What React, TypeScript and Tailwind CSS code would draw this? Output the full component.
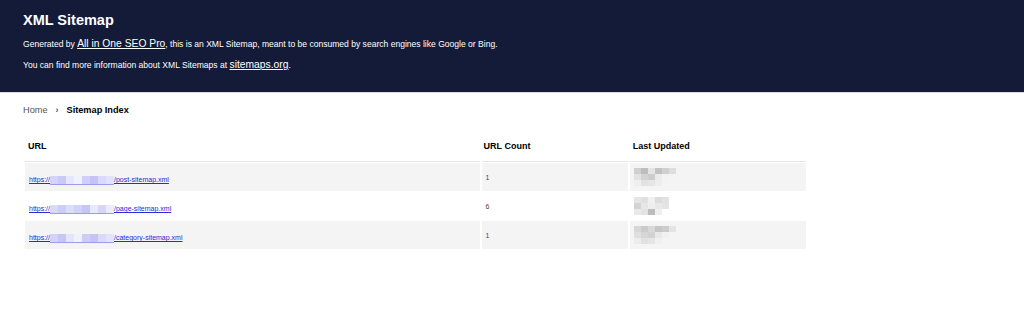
import React from "react";

const rows = [
    {
        path: "/post-sitemap.xml",
        count: "1",
        domain: ["#d4d4fb", "#c9c9f7", "#e6e6fd", "#f2f2fe", "#cfcff9", "#c3c3f5", "#d9d9fb", "#e2e2fc"],
        date: [
            ["#cfcfcf", "#bdbdbd", "#e4e4e4", "#c2c2c2", "#d0d0d0", "#dedede", "#f4f4f4"],
            ["#e2e2e2", "#d3d3d3", "#cdcdcd", "#ebebeb", "#f3f3f3", "#f4f4f4", "#f4f4f4"],
            ["#efefef", "#e3e3e3", "#e6e6e6", "#ededed", "#f3f3f3", "#f4f4f4", "#f4f4f4"],
        ],
    },
    {
        path: "/page-sitemap.xml",
        count: "6",
        domain: ["#d9d9fb", "#cdcdf8", "#dcdcfb", "#d1d1f9", "#c6c6f6", "#e9e9fd", "#d6d6fa", "#ececfd"],
        date: [
            ["#e5e5e5", "#e0e0e0", "#f0f0f0", "#dcdcdc", "#e2e2e2", "#ffffff", "#ffffff"],
            ["#d4d4d4", "#e6e6e6", "#eeeeee", "#e8e8e8", "#e4e4e4", "#ffffff", "#ffffff"],
            ["#e9e9e9", "#e3e3e3", "#bcbcbc", "#efefef", "#ffffff", "#ffffff", "#ffffff"],
        ],
    },
    {
        path: "/category-sitemap.xml",
        count: "1",
        domain: ["#d2d2fa", "#c7c7f6", "#e4e4fc", "#f0f0fe", "#cdcdf8", "#c4c4f5", "#dadafb", "#e3e3fc"],
        date: [
            ["#d6d6d6", "#cbcbcb", "#d8d8d8", "#c6c6c6", "#cccccc", "#e4e4e4", "#f4f4f4"],
            ["#dfdfdf", "#d6d6d6", "#d2d2d2", "#e8e8e8", "#f1f1f1", "#f4f4f4", "#f4f4f4"],
            ["#ececec", "#e1e1e1", "#e5e5e5", "#f0f0f0", "#f4f4f4", "#f4f4f4", "#f4f4f4"],
        ],
    },
];

const App = () => {
    return (
        <div className="min-h-[329px] bg-white font-['Liberation_Sans',Arial,sans-serif] text-[#333]">
            <header className="h-[93px] border-b border-[#dcdcdc] bg-[#141b38] px-[23px] pt-[12px] text-white">
                <h1 className="text-[14.5px] font-bold leading-[16px]">XML Sitemap</h1>
                <p className="mt-[10px] text-[8.55px] leading-[12px]">
                    Generated by{" "}
                    <a href="#" className="text-[10.3px] text-white underline">
                        All in One SEO Pro
                    </a>
                    , this is an XML Sitemap, meant to be consumed by search engines like Google or Bing.
                </p>
                <p className="mt-[9px] text-[8.55px] leading-[12px]">
                    You can find more information about XML Sitemaps at{" "}
                    <a href="#" className="text-[10.3px] text-white underline">
                        sitemaps.org
                    </a>
                    .
                </p>
            </header>

            <div className="px-[23px]">
                <nav className="flex h-[34px] items-center gap-[8px] pt-[1px] text-[9.2px]">
                    <span className="text-[#555]">Home</span>
                    <span className="text-[9px] font-bold text-[#555]">›</span>
                    <span className="font-bold text-black">Sitemap Index</span>
                </nav>

                <table className="mt-[6px] w-[785px] border-separate border-spacing-x-[2px] border-spacing-y-0 text-left">
                    <thead>
                        <tr>
                            <th className="h-[29px] w-[454px] border-b border-[#e5e5e5] pl-[3px] align-middle text-[9px] font-bold text-black">
                                URL
                            </th>
                            <th className="h-[29px] w-[146px] border-b border-[#e5e5e5] pl-[2px] align-middle text-[9px] font-bold text-black">
                                URL Count
                            </th>
                            <th className="h-[29px] w-[176px] border-b border-[#e5e5e5] pl-[3px] align-middle text-[9px] font-bold text-black">
                                Last Updated
                            </th>
                        </tr>
                    </thead>
                    <tbody>
                        {rows.map((row, index) => (
                            <tr key={index} className={index % 2 === 0 ? "bg-[#f4f4f4]" : "bg-white"}>
                                <td className="h-[29px] border-t border-white pl-[4px] align-middle leading-none">
                                    <a href="#" className="inline-flex items-center text-[7px] leading-[10px] text-[#2a2ad6] underline">
                                        <span>https://</span>
                                        <span className="flex h-[9px] border-b border-[#9c9ce8]">
                                            {row.domain.map((c, i) => (
                                                <span key={i} className="h-full w-[8px]" style={{ backgroundColor: c }} />
                                            ))}
                                        </span>
                                        <span>{row.path}</span>
                                    </a>
                                </td>
                                <td className="h-[29px] border-t border-white pl-[4px] align-middle text-[7px] leading-none text-[#5a3a3a]">
                                    {row.count}
                                </td>
                                <td className="h-[29px] border-t border-white pl-[4px] align-middle leading-none">
                                    <div className="flex flex-col">
                                        {row.date.map((line, li) => (
                                            <div key={li} className="flex">
                                                {line.map((c, ci) => (
                                                    <span key={ci} className="h-[6px] w-[7px]" style={{ backgroundColor: c }} />
                                                ))}
                                            </div>
                                        ))}
                                    </div>
                                </td>
                            </tr>
                        ))}
                    </tbody>
                </table>
            </div>
        </div>
    );
};

export default App;
